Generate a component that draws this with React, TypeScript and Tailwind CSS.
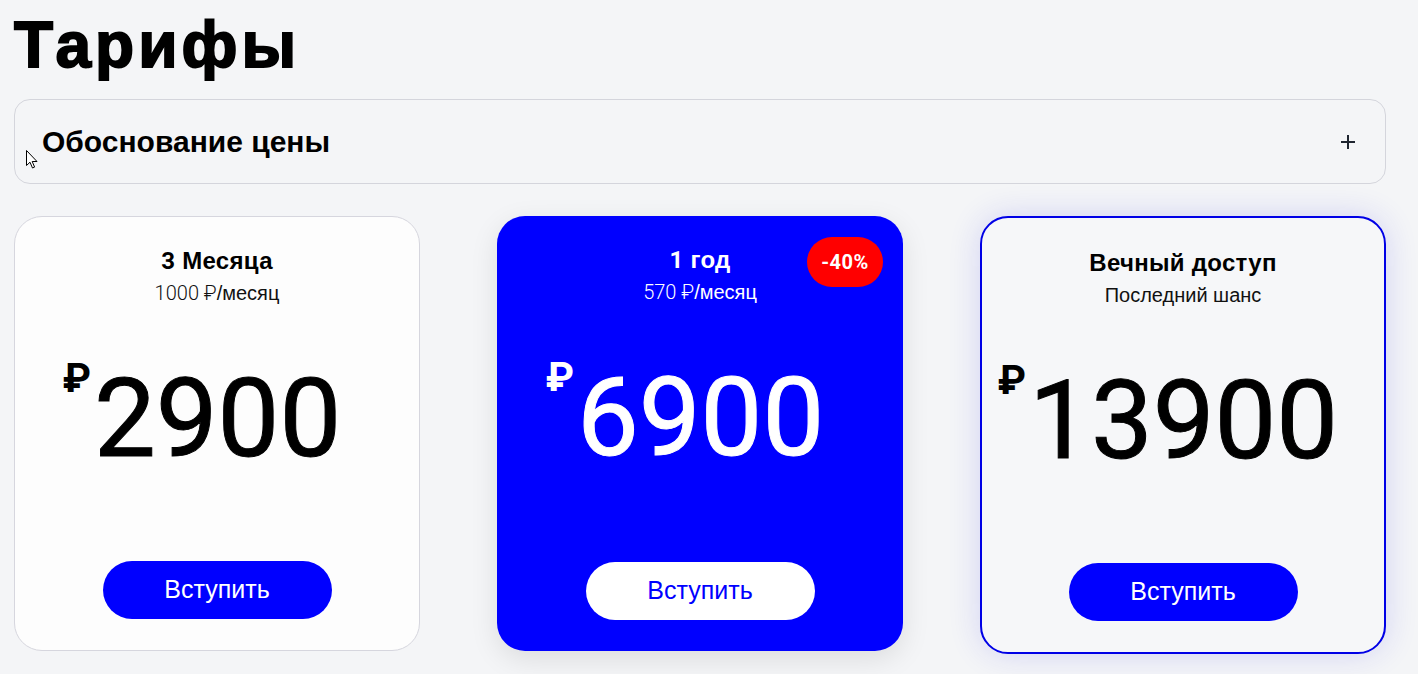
import React from "react";

const sans = "font-['Liberation_Sans',Arial,sans-serif]";
const digits = "font-['Roboto','Liberation_Sans',sans-serif]";

function Price({ value, dark }: { value: string; dark?: boolean }) {
  return (
    <div className={`mt-[59px] flex items-start justify-center pr-[30px] ${dark ? "text-white" : "text-black"}`}>
      <span className={`${digits} -mt-[5px] mr-[3px] text-[40px] font-bold leading-none`}>₽</span>
      <span className={`${digits} text-[110px] font-normal leading-none [-webkit-text-stroke:1px_currentColor]`}>{value}</span>
    </div>
  );
}

function Card({
  title,
  sub,
  price,
  variant,
}: {
  title: React.ReactNode;
  sub: React.ReactNode;
  price: string;
  variant: "plain" | "blue" | "outlined";
}) {
  const base = "relative flex h-[435px] flex-col items-center rounded-[28px] pt-[30px] pb-[31px]";
  const cls =
    variant === "plain"
      ? "bg-[#fdfdfd] border border-[#d6d6de]"
      : variant === "blue"
      ? "bg-[#0000ff] shadow-[0_8px_28px_rgba(0,0,0,0.10)]"
      : "bg-[#f6f7f9] border-2 border-[#0000e6] h-[438px] pt-[31px] shadow-[0_0_32px_rgba(40,40,230,0.16)]";
  const dark = variant === "blue";
  return (
    <div className={`${base} ${cls}`}>
      {variant === "blue" && (
        <div className={`${digits} absolute right-[20px] top-[21px] flex h-[50px] w-[76px] items-center justify-center rounded-full bg-[#ff0000] text-[20px] font-bold tracking-[0.5px] text-white`}>
          -40%
        </div>
      )}
      <div className={`${sans} text-[24px] font-bold leading-[28px] tracking-[0.3px] ${dark ? "text-white" : "text-black"}`}>{title}</div>
      <div className={`${sans} mt-[6px] text-[20px] leading-[24px] ${dark ? "text-white" : "text-[#111]"}`}>{sub}</div>
      <Price value={price} dark={dark} />
      <button
        className={`${sans} mt-auto flex h-[58px] w-[229px] items-center justify-center rounded-full text-[25px] ${
          dark ? "bg-white text-[#0000ff]" : "bg-[#0000ff] text-white"
        }`}
      >
        Вступить
      </button>
    </div>
  );
}

export default function App() {
  return (
    <div className="relative min-h-[674px] w-full bg-[#f4f5f7] pl-[14px] pr-[32px] pt-[13px]">
      <h1 className={`${sans} text-[64px] font-bold leading-[64px] tracking-[4px] text-black [-webkit-text-stroke:1.8px_black]`}>Тарифы</h1>

      <div className="mt-[22px] flex h-[85px] items-center justify-between rounded-[16px] border border-[#d4d5dc] bg-[#f4f5f7] pl-[27px] pr-[31px]">
        <span className={`${sans} text-[30px] font-bold text-black`}>Обоснование цены</span>
        <svg width="16" height="16" viewBox="0 0 16 16" className="-mr-[2px] text-[#1f2530]">
          <path d="M8 1v14M1 8h14" stroke="currentColor" strokeWidth="2" />
        </svg>
      </div>

      <div className="mt-[32px] grid grid-cols-3 gap-[77px]">
        <Card
          variant="plain"
          title={<><span className={digits}>3</span> Месяца</>}
          sub={<><span className={`${digits} font-light`}>1000 ₽</span>/месяц</>}
          price="2900"
        />
        <Card
          variant="blue"
          title={<><span className={digits}>1</span> год</>}
          sub={<><span className={`${digits} font-light`}>570 ₽</span>/месяц</>}
          price="6900"
        />
        <Card variant="outlined" title="Вечный доступ" sub="Последний шанс" price="13900" />
      </div>

      <svg className="absolute left-[26px] top-[150px]" width="12" height="19" viewBox="0 0 12 19">
        <path d="M0.5 0.5V15.5L4 12.2L6.5 18L8.6 17.1L6.2 11.5H11Z" fill="white" stroke="black" strokeWidth="1" strokeLinejoin="round" />
      </svg>
    </div>
  );
}
